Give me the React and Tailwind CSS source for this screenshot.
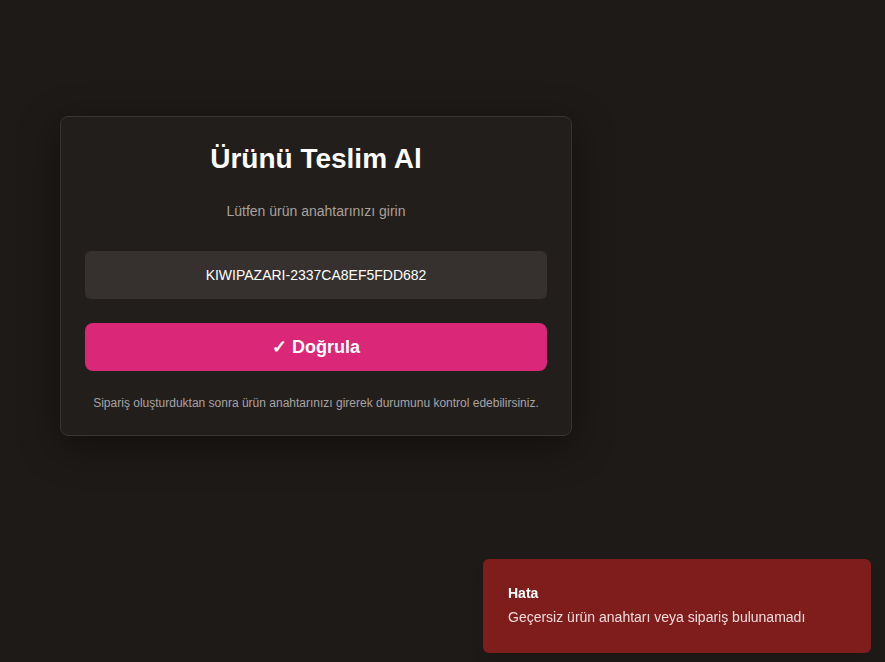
import React, { useState } from 'react';

function Toast({ title, message }) {
  return (
    <div className="fixed bottom-[9px] right-[14px] w-[388px] rounded-md bg-[#7f1d1d] px-[25px] pt-[24px] pb-[26px] shadow-lg">
      <p className="text-sm font-bold leading-5 text-white">{title}</p>
      <p className="mt-[4px] text-sm leading-5 text-[#f0dada]">{message}</p>
    </div>
  );
}

export default function App() {
  const [productKey, setProductKey] = useState('KIWIPAZARI-2337CA8EF5FDD682');

  return (
    <div className="min-h-screen bg-[#1e1a17] font-['Liberation_Sans',Arial,sans-serif] pl-[60px] pt-[116px]">
      <div className="w-[512px] rounded-lg border border-[#383431] bg-[#221e1b] px-6 pt-6 pb-6 shadow-[0_10px_40px_rgba(0,0,0,0.45)]">
        <h1 className="text-center text-[28px] font-bold leading-9 text-white">Ürünü Teslim Al</h1>
        <p className="mt-6 text-center text-sm leading-5 text-[#a8a29e]">Lütfen ürün anahtarınızı girin</p>

        <input
          value={productKey}
          onChange={(e) => setProductKey(e.target.value)}
          className="mt-[30px] block h-12 w-full rounded-md bg-[#36312e] px-4 text-center text-sm text-white outline-none"
        />

        <button className="mt-6 flex h-12 w-full items-center justify-center rounded-lg bg-[#db2777] text-lg font-bold text-white">
          ✓ Doğrula
        </button>

        <p className="mt-6 text-center text-xs leading-4 text-[#a8a4a6]">
          Sipariş oluşturduktan sonra ürün anahtarınızı girerek durumunu kontrol edebilirsiniz.
        </p>
      </div>

      <Toast title="Hata" message="Geçersiz ürün anahtarı veya sipariş bulunamadı" />
    </div>
  );
}
